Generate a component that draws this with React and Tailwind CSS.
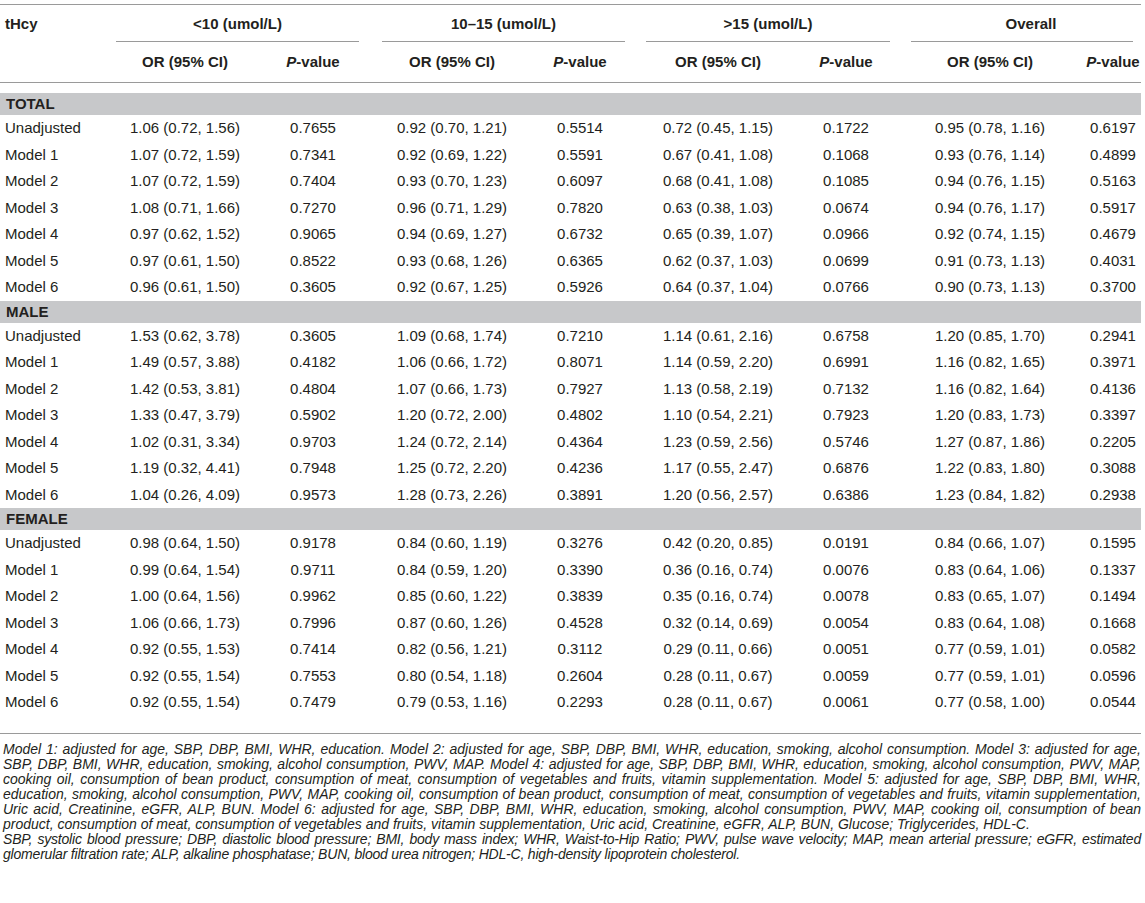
import React from 'react';

const sections = [
  {
    title: 'TOTAL',
    rows: [
      ['Unadjusted', '1.06 (0.72, 1.56)', '0.7655', '0.92 (0.70, 1.21)', '0.5514', '0.72 (0.45, 1.15)', '0.1722', '0.95 (0.78, 1.16)', '0.6197'],
      ['Model 1', '1.07 (0.72, 1.59)', '0.7341', '0.92 (0.69, 1.22)', '0.5591', '0.67 (0.41, 1.08)', '0.1068', '0.93 (0.76, 1.14)', '0.4899'],
      ['Model 2', '1.07 (0.72, 1.59)', '0.7404', '0.93 (0.70, 1.23)', '0.6097', '0.68 (0.41, 1.08)', '0.1085', '0.94 (0.76, 1.15)', '0.5163'],
      ['Model 3', '1.08 (0.71, 1.66)', '0.7270', '0.96 (0.71, 1.29)', '0.7820', '0.63 (0.38, 1.03)', '0.0674', '0.94 (0.76, 1.17)', '0.5917'],
      ['Model 4', '0.97 (0.62, 1.52)', '0.9065', '0.94 (0.69, 1.27)', '0.6732', '0.65 (0.39, 1.07)', '0.0966', '0.92 (0.74, 1.15)', '0.4679'],
      ['Model 5', '0.97 (0.61, 1.50)', '0.8522', '0.93 (0.68, 1.26)', '0.6365', '0.62 (0.37, 1.03)', '0.0699', '0.91 (0.73, 1.13)', '0.4031'],
      ['Model 6', '0.96 (0.61, 1.50)', '0.3605', '0.92 (0.67, 1.25)', '0.5926', '0.64 (0.37, 1.04)', '0.0766', '0.90 (0.73, 1.13)', '0.3700'],
    ],
  },
  {
    title: 'MALE',
    rows: [
      ['Unadjusted', '1.53 (0.62, 3.78)', '0.3605', '1.09 (0.68, 1.74)', '0.7210', '1.14 (0.61, 2.16)', '0.6758', '1.20 (0.85, 1.70)', '0.2941'],
      ['Model 1', '1.49 (0.57, 3.88)', '0.4182', '1.06 (0.66, 1.72)', '0.8071', '1.14 (0.59, 2.20)', '0.6991', '1.16 (0.82, 1.65)', '0.3971'],
      ['Model 2', '1.42 (0.53, 3.81)', '0.4804', '1.07 (0.66, 1.73)', '0.7927', '1.13 (0.58, 2.19)', '0.7132', '1.16 (0.82, 1.64)', '0.4136'],
      ['Model 3', '1.33 (0.47, 3.79)', '0.5902', '1.20 (0.72, 2.00)', '0.4802', '1.10 (0.54, 2.21)', '0.7923', '1.20 (0.83, 1.73)', '0.3397'],
      ['Model 4', '1.02 (0.31, 3.34)', '0.9703', '1.24 (0.72, 2.14)', '0.4364', '1.23 (0.59, 2.56)', '0.5746', '1.27 (0.87, 1.86)', '0.2205'],
      ['Model 5', '1.19 (0.32, 4.41)', '0.7948', '1.25 (0.72, 2.20)', '0.4236', '1.17 (0.55, 2.47)', '0.6876', '1.22 (0.83, 1.80)', '0.3088'],
      ['Model 6', '1.04 (0.26, 4.09)', '0.9573', '1.28 (0.73, 2.26)', '0.3891', '1.20 (0.56, 2.57)', '0.6386', '1.23 (0.84, 1.82)', '0.2938'],
    ],
  },
  {
    title: 'FEMALE',
    rows: [
      ['Unadjusted', '0.98 (0.64, 1.50)', '0.9178', '0.84 (0.60, 1.19)', '0.3276', '0.42 (0.20, 0.85)', '0.0191', '0.84 (0.66, 1.07)', '0.1595'],
      ['Model 1', '0.99 (0.64, 1.54)', '0.9711', '0.84 (0.59, 1.20)', '0.3390', '0.36 (0.16, 0.74)', '0.0076', '0.83 (0.64, 1.06)', '0.1337'],
      ['Model 2', '1.00 (0.64, 1.56)', '0.9962', '0.85 (0.60, 1.22)', '0.3839', '0.35 (0.16, 0.74)', '0.0078', '0.83 (0.65, 1.07)', '0.1494'],
      ['Model 3', '1.06 (0.66, 1.73)', '0.7996', '0.87 (0.60, 1.26)', '0.4528', '0.32 (0.14, 0.69)', '0.0054', '0.83 (0.64, 1.08)', '0.1668'],
      ['Model 4', '0.92 (0.55, 1.53)', '0.7414', '0.82 (0.56, 1.21)', '0.3112', '0.29 (0.11, 0.66)', '0.0051', '0.77 (0.59, 1.01)', '0.0582'],
      ['Model 5', '0.92 (0.55, 1.54)', '0.7553', '0.80 (0.54, 1.18)', '0.2604', '0.28 (0.11, 0.67)', '0.0059', '0.77 (0.59, 1.01)', '0.0596'],
      ['Model 6', '0.92 (0.55, 1.54)', '0.7479', '0.79 (0.53, 1.16)', '0.2293', '0.28 (0.11, 0.67)', '0.0061', '0.77 (0.58, 1.00)', '0.0544'],
    ],
  },
];

const groups = [
  { label: '<10 (umol/L)', cls: 'w-[243px] ml-[116px]' },
  { label: '10–15 (umol/L)', cls: 'w-[243px] ml-[23px]' },
  { label: '>15 (umol/L)', cls: 'w-[244px] ml-[21px]' },
  { label: 'Overall', cls: 'w-[222px] ml-[21px] pl-[18px]' },
];

// shared column template for the sub header and the data rows
const cols = 'grid grid-cols-[120px_130px_126px_152px_104px_172px_84px_204px_48px]';

const PValue = () => (
  <span>
    <i>P</i>-value
  </span>
);

export default function App() {
  return (
    <div className="w-[1145px] h-[903px] bg-white text-[#231f20] font-['Liberation_Sans',Arial,sans-serif]">
      <div className="w-[1141px] pt-[4px]">
        {/* header */}
        <div className="border-t border-[#9a9a9a]">
          <div className="relative flex items-end h-[37px] text-[15px] font-bold">
            <span className="absolute left-[5px] bottom-[7px]">tHcy</span>
            {groups.map((g) => (
              <div key={g.label} className={`${g.cls} text-center pb-[6px] border-b border-[#9a9a9a]`}>
                {g.label}
              </div>
            ))}
          </div>
          <div className={`${cols} h-[41px] items-center text-[15px] font-bold border-b border-[#9a9a9a]`}>
            <div />
            <div className="text-center">OR (95% CI)</div>
            <div className="text-center"><PValue /></div>
            <div className="text-center">OR (95% CI)</div>
            <div className="text-center"><PValue /></div>
            <div className="text-center">OR (95% CI)</div>
            <div className="text-center"><PValue /></div>
            <div className="text-center">OR (95% CI)</div>
            <div className="text-center -ml-[6px]"><PValue /></div>
          </div>
        </div>

        {/* body */}
        <div className="pt-[10px] pb-[17px] border-b border-[#9a9a9a] text-[15px]">
          {sections.map((s) => (
            <div key={s.title}>
              <div className="h-[22px] bg-[#c7c8ca] pl-[6px] font-bold leading-[22px]">{s.title}</div>
              {s.rows.map((r) => (
                <div key={r[0]} className={`${cols} h-[26.5px] items-center`}>
                  {r.map((c, i) => (
                    <div key={i} className={i === 0 ? 'pl-[5px]' : i === 8 ? 'text-center -ml-[6px] whitespace-nowrap' : 'text-center whitespace-nowrap'}>
                      {c}
                    </div>
                  ))}
                </div>
              ))}
            </div>
          ))}
        </div>

        {/* footnotes */}
        <div className="pt-[8px] pl-[3px] text-[14px] leading-[15px] italic text-justify">
          <p>
            Model 1: adjusted for age, SBP, DBP, BMI, WHR, education. Model 2: adjusted for age, SBP, DBP, BMI, WHR, education, smoking, alcohol consumption. Model 3: adjusted for age, SBP, DBP, BMI, WHR, education, smoking, alcohol consumption, PWV, MAP. Model 4: adjusted for age, SBP, DBP, BMI, WHR, education, smoking, alcohol consumption, PWV, MAP, cooking oil, consumption of bean product, consumption of meat, consumption of vegetables and fruits, vitamin supplementation. Model 5: adjusted for age, SBP, DBP, BMI, WHR, education, smoking, alcohol consumption, PWV, MAP, cooking oil, consumption of bean product, consumption of meat, consumption of vegetables and fruits, vitamin supplementation, Uric acid, Creatinine, eGFR, ALP, BUN. Model 6: adjusted for age, SBP, DBP, BMI, WHR, education, smoking, alcohol consumption, PWV, MAP, cooking oil, consumption of bean product, consumption of meat, consumption of vegetables and fruits, vitamin supplementation, Uric acid, Creatinine, eGFR, ALP, BUN, Glucose; Triglycerides, HDL-C.
          </p>
          <p className="tracking-[-0.2px]">
            SBP, systolic blood pressure; DBP, diastolic blood pressure; BMI, body mass index; WHR, Waist-to-Hip Ratio; PWV, pulse wave velocity; MAP, mean arterial pressure; eGFR, estimated glomerular filtration rate; ALP, alkaline phosphatase; BUN, blood urea nitrogen; HDL-C, high-density lipoprotein cholesterol.
          </p>
        </div>
      </div>
    </div>
  );
}
